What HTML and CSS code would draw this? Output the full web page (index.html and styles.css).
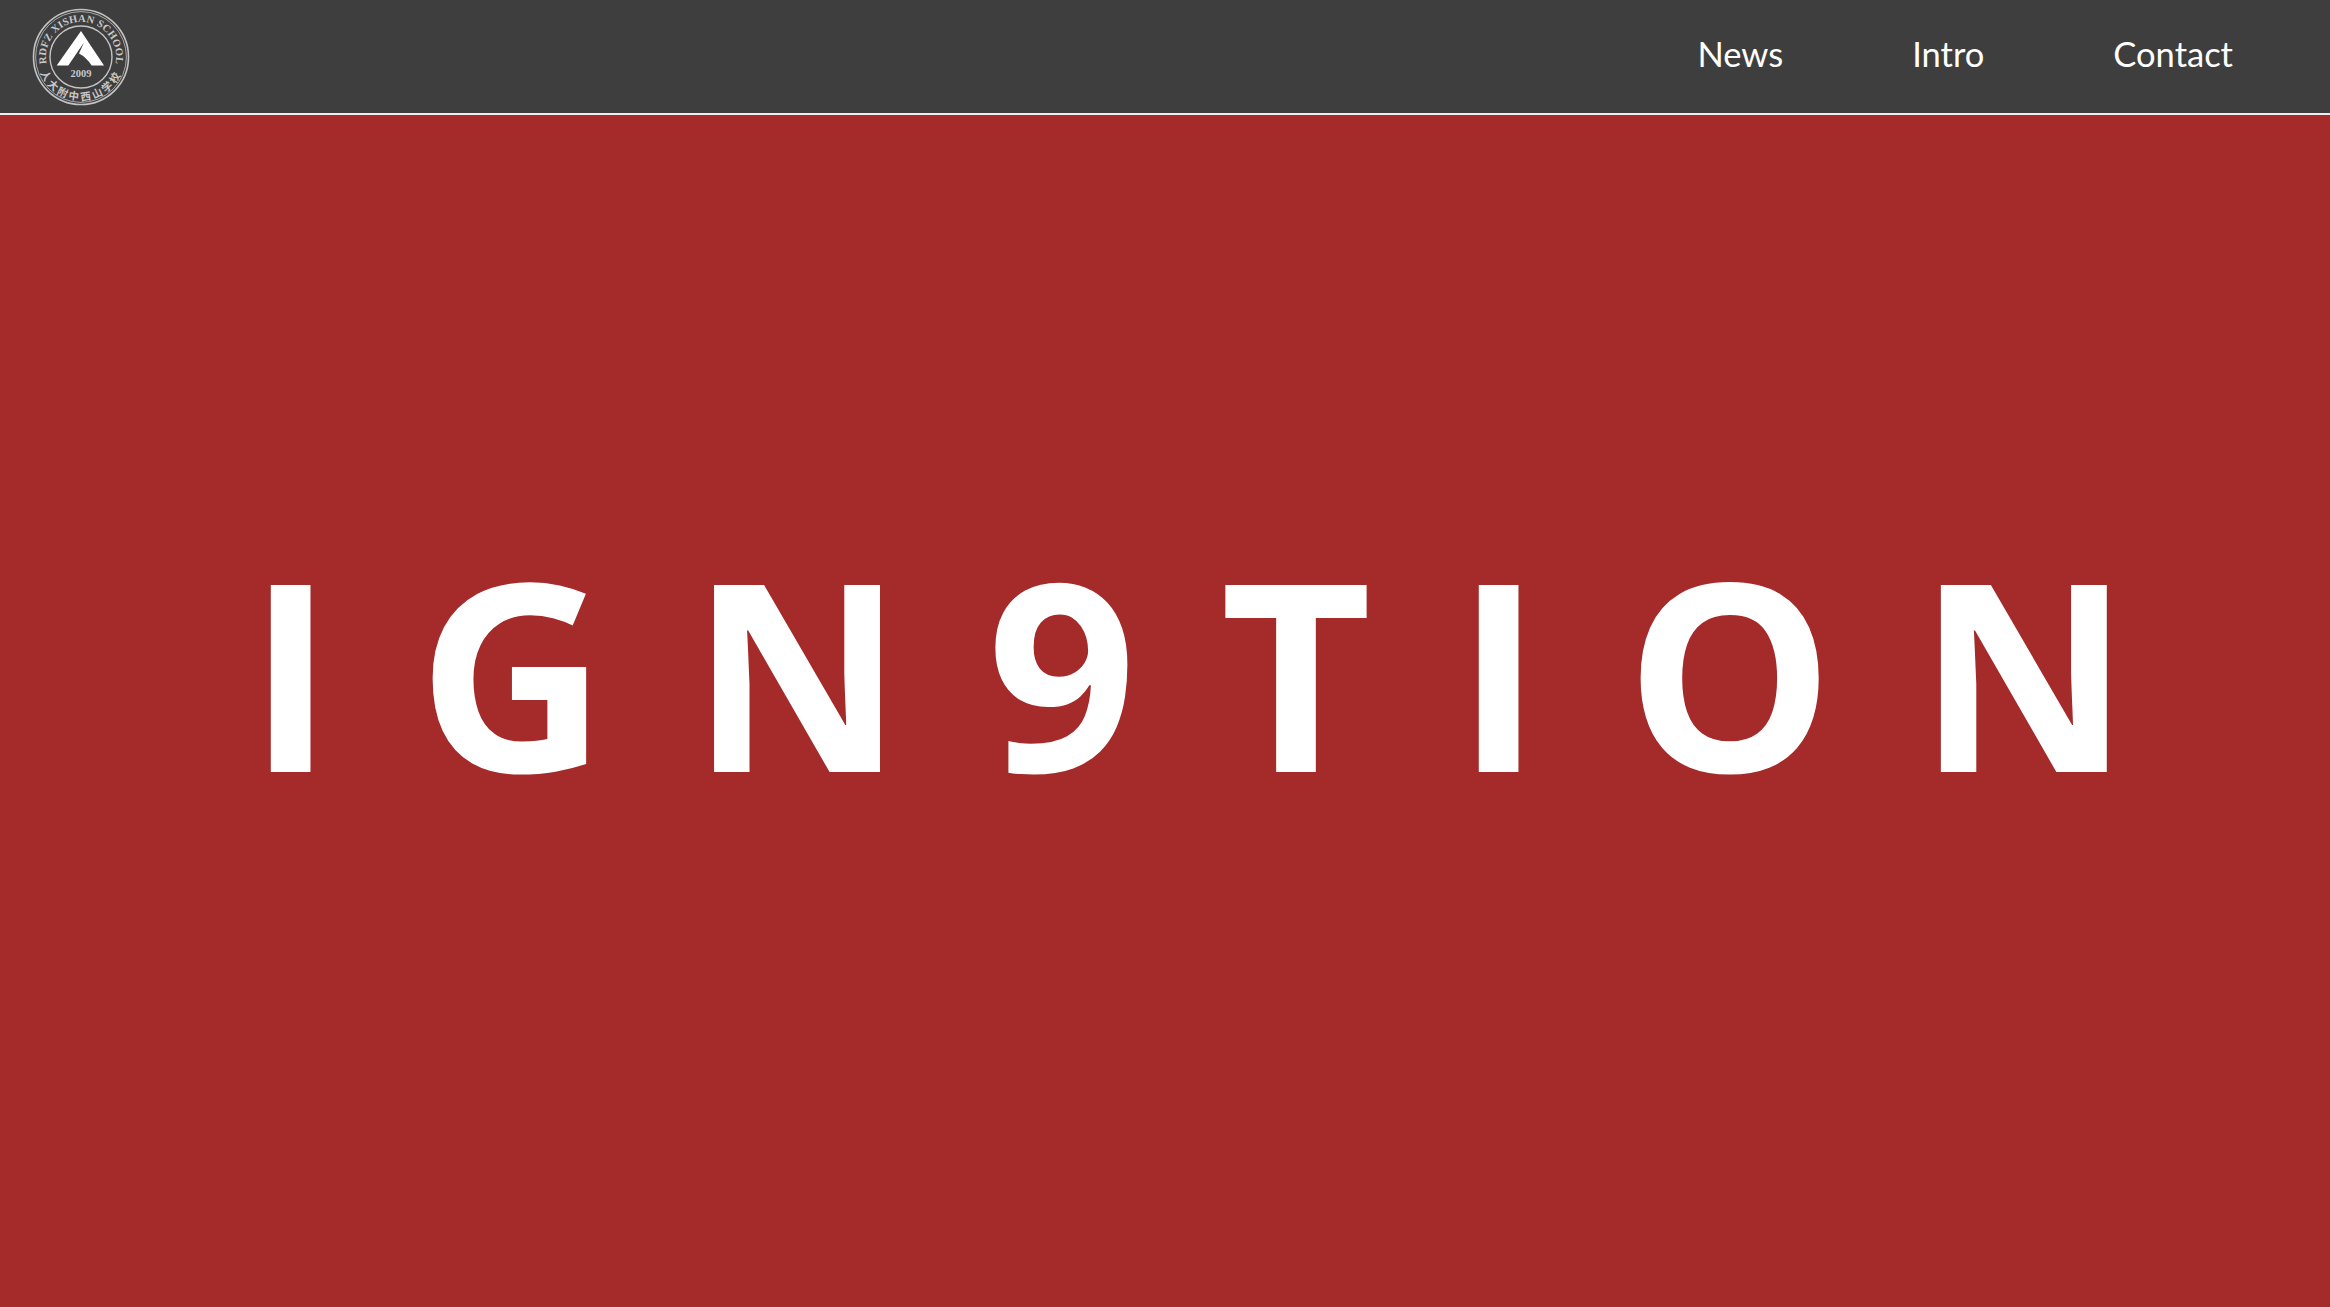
FILE: index.html
```html
<!DOCTYPE html>
<html lang="en">
<head>
    <meta charset="UTF-8">
    <title>IGN9TION</title>
    <link rel="stylesheet" href="styles.css">
</head>
<body>
    <header class="topbar">
        <!-- school badge -->
        <svg class="logo" width="100" height="100" viewBox="0 0 100 100">
            <defs>
                <path id="arc-top" d="M21.3,70 A35,35 0 1,1 78.7,70" />
                <path id="arc-bottom" d="M6.5,50 A43.5,43.5 0 0,0 93.5,50" />
            </defs>
            <circle cx="50" cy="50" r="47.5" fill="none" stroke="#c4c4c4" stroke-width="1.6" />
            <circle cx="50" cy="50" r="45.4" fill="none" stroke="#c4c4c4" stroke-width="0.8" />
            <circle cx="50" cy="50" r="31" fill="none" stroke="#c4c4c4" stroke-width="1.4" />
            <text class="logo-en"><textPath href="#arc-top" startOffset="50%" text-anchor="middle">RDFZ XISHAN SCHOOL</textPath></text>
            <text class="logo-cn"><textPath href="#arc-bottom" startOffset="50%" text-anchor="middle">人大附中西山学校</textPath></text>
            <path d="M50,24 L73,58.5 L60.7,58.5 Q55,50 48,46.5 L53,35.5 L37.3,58.5 L25.7,58.5 Z" fill="#fff" />
            <text class="logo-year" x="50" y="70">2009</text>
        </svg>
        <nav class="nav">
            <a href="#">News</a>
            <a href="#">Intro</a>
            <a href="#">Contact</a>
        </nav>
    </header>
    <main class="hero">
        <h1>IGN9TION</h1>
    </main>
</body>
</html>
```

FILE: styles.css
```css
* {
    box-sizing: border-box;
}
html, body {
    height: 100%;
}
body {
    margin: 0;
    display: flex;
    flex-direction: column;
    font-family: "Open Sans", "Noto Sans", sans-serif;
    background-color: #a52a2a;
}
.topbar {
    height: 115px;
    flex: none;
    display: flex;
    align-items: center;
    justify-content: space-between;
    padding: 0 97px 0 31px;
    background-color: #3e3e3e;
    border-bottom: 2px solid #eee;
}
.logo {
    display: block;
}
.logo-en {
    font-family: "Liberation Serif", serif;
    font-size: 10.5px;
    font-weight: bold;
    fill: #c8c8c8;
    letter-spacing: 0.2px;
}
.logo-cn {
    font-family: "Noto Sans CJK SC", sans-serif;
    font-size: 10.5px;
    font-weight: bold;
    fill: #c8c8c8;
    letter-spacing: 2.5px;
}
.logo-year {
    font-family: "Liberation Serif", serif;
    font-size: 10.5px;
    font-weight: bold;
    fill: #c8c8c8;
    text-anchor: middle;
}
.nav {
    display: flex;
    gap: 129px;
    padding-bottom: 7px;
}
.nav a {
    color: #fff;
    font-family: "Lato", sans-serif;
    font-size: 34.5px;
    text-decoration: none;
}
.hero {
    flex: 1;
    display: flex;
    align-items: center;
    justify-content: center;
    padding: 0 0 80px 131px;
}
.hero h1 {
    margin: 0;
    color: #fff;
    font-size: 262px;
    font-weight: bold;
    letter-spacing: 83.4px;
    line-height: 1;
    white-space: nowrap;
}
```
